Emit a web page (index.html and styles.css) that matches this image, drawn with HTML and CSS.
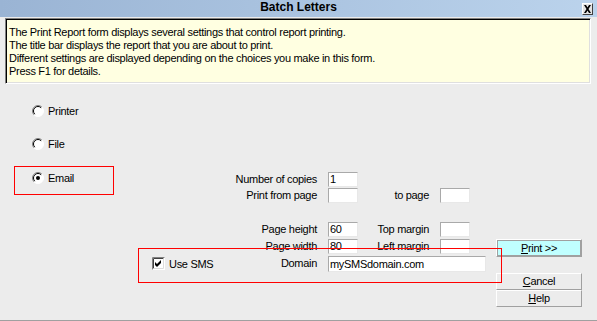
FILE: index.html
```html
<!DOCTYPE html>
<html>
<head>
<meta charset="utf-8">
<link rel="stylesheet" href="styles.css">
</head>
<body>
<div class="window">
  <div class="titlebar">
    <span class="title">Batch Letters</span>
    <span class="close">
      <svg width="9" height="8" viewBox="0 0 9 8"><path d="M1 0h2l1.5 2.5L6 0h2L5.5 4 8 8H6L4.5 5.5 3 8H1l2.5-4z" fill="#000"/></svg>
    </span>
  </div>
  <div class="info">
    <div>The Print Report form displays several settings that control report printing.</div>
    <div>The title bar displays the report that you are about to print.</div>
    <div>Different settings are displayed depending on the choices you make in this form.</div>
    <div>Press F1 for details.</div>
  </div>
  <div class="main">
    <div class="radios">
      <div class="radio"><svg class="rb" width="12" height="12" viewBox="0 0 12 12"><circle cx="6" cy="6" r="5.5" fill="#fff"/><path d="M2.1 9.9A5.5 5.5 0 0 1 9.9 2.1" fill="none" stroke="#808080"/><path d="M2.8 9.2A4.5 4.5 0 0 1 9.2 2.8" fill="none" stroke="#000"/><path d="M9.9 2.1A5.5 5.5 0 0 1 2.1 9.9" fill="none" stroke="#fff"/></svg><span>Printer</span></div>
      <div class="radio"><svg class="rb" width="12" height="12" viewBox="0 0 12 12"><circle cx="6" cy="6" r="5.5" fill="#fff"/><path d="M2.1 9.9A5.5 5.5 0 0 1 9.9 2.1" fill="none" stroke="#808080"/><path d="M2.8 9.2A4.5 4.5 0 0 1 9.2 2.8" fill="none" stroke="#000"/><path d="M9.9 2.1A5.5 5.5 0 0 1 2.1 9.9" fill="none" stroke="#fff"/></svg><span>File</span></div>
      <div class="radio"><svg class="rb" width="12" height="12" viewBox="0 0 12 12"><circle cx="6" cy="6" r="5.5" fill="#fff"/><path d="M2.1 9.9A5.5 5.5 0 0 1 9.9 2.1" fill="none" stroke="#808080"/><path d="M2.8 9.2A4.5 4.5 0 0 1 9.2 2.8" fill="none" stroke="#000"/><path d="M9.9 2.1A5.5 5.5 0 0 1 2.1 9.9" fill="none" stroke="#fff"/><circle cx="6" cy="6" r="2" fill="#000"/></svg><span>Email</span></div>
    </div>
    <div class="form">
      <div class="lbl c2 r1">Number of copies</div>
      <div class="field c3 r1">1</div>
      <div class="lbl c2 r2">Print from page</div>
      <div class="field c3 r2"></div>
      <div class="lbl c4 r2">to page</div>
      <div class="field c5 r2"></div>
      <div class="lbl c2 r3">Page height</div>
      <div class="field c3 r3">60</div>
      <div class="lbl c4 r3">Top margin</div>
      <div class="field c5 r3"></div>
      <div class="lbl c2 r4">Page width</div>
      <div class="field c3 r4">80</div>
      <div class="lbl c4 r4">Left margin</div>
      <div class="field c5 r4"></div>
      <div class="check c1 r5"><svg width="13" height="13" viewBox="0 0 13 13"><rect x="0" y="0" width="13" height="13" fill="#fff"/><path d="M0.5 12.5V0.5H12.5" fill="none" stroke="#808080"/><path d="M1.5 11.5V1.5H11.5" fill="none" stroke="#404040"/><path d="M1.5 11.5H11.5V1.5" fill="none" stroke="#dcdcdc"/><polygon points="3,5 5,7 9,3 9,6 5,10 3,8" fill="#000"/></svg><span>Use SMS</span></div>
      <div class="lbl c2 r5">Domain</div>
      <div class="field domain r5">mySMSdomain.com</div>
    </div>
    <div class="buttons">
      <div class="btn print"><u>P</u>rint &gt;&gt;</div>
      <div class="btn"><u>C</u>ancel</div>
      <div class="btn"><u>H</u>elp</div>
    </div>
    <div class="mark mark-email"></div>
    <div class="mark mark-sms"></div>
  </div>
</div>
</body>
</html>
```
FILE: styles.css
```css
html, body {
  margin: 0;
  padding: 0;
}
body {
  background: #ececec;
  font-family: "Liberation Sans", Arial, sans-serif;
  font-size: 11px;
  letter-spacing: -0.3px;
  color: #000;
  width: 597px;
  height: 321px;
  overflow: hidden;
}
.window {
  width: 597px;
}
.titlebar {
  height: 17px;
  display: grid;
  grid-template-columns: 1fr auto 1fr;
  background: linear-gradient(to right, #9ab4d4, #bbd3ec);
}
.title {
  grid-column: 2;
  font-weight: bold;
  font-size: 12px;
  letter-spacing: 0;
  line-height: 15px;
}
.close {
  grid-column: 3;
  justify-self: end;
  align-self: start;
  margin: 3px 4px 0 0;
  box-sizing: border-box;
  width: 11px;
  height: 12px;
  background: #e4e4e4;
  border: 1px solid;
  border-color: #fff #404040 #404040 #fff;
  display: flex;
  align-items: center;
  justify-content: center;
}
.info {
  margin: 1px 6px 0 5px;
  padding: 7px 4px 5px 3px;
  border: 1px solid;
  border-color: #808080 #fff #fff #808080;
  box-shadow: inset 1px 1px 0 #000, inset -1px -1px 0 #dfdfdf;
  background: #ffffe1;
  line-height: 13px;
}
.main {
  position: relative;
  display: flex;
  height: 236px;
  border-bottom: 1px solid #a0a0a0;
}
.radios {
  width: 140px;
  padding-top: 21px;
  box-sizing: border-box;
  display: grid;
  grid-template-rows: 33px 34px 12px;
  align-content: start;
}
.radio {
  display: flex;
  align-items: center;
  gap: 4px;
  height: 12px;
  padding-left: 32px;
  line-height: 12px;
}
.rb {
  display: block;
  flex: none;
}
.form {
  width: 356px;
  box-sizing: border-box;
  padding-top: 88px;
  display: grid;
  grid-template-columns: 90px 98px 30px 82px 30px 26px;
  grid-template-rows: 16px 34px 17px 17px 17px;
  align-items: start;
}
.c1 { grid-column: 1; }
.c2 { grid-column: 2; }
.c3 { grid-column: 3; }
.c4 { grid-column: 4; }
.c5 { grid-column: 5; }
.r1 { grid-row: 1; }
.r2 { grid-row: 2; }
.r3 { grid-row: 3; }
.r4 { grid-row: 4; }
.r5 { grid-row: 5; }
.lbl {
  text-align: right;
  padding-right: 11px;
  line-height: 15px;
  white-space: nowrap;
}
.field {
  box-sizing: border-box;
  width: 30px;
  height: 15px;
  background: #fff;
  border: 1px solid;
  border-color: #a9a9a9 #e8e8e8 #e8e8e8 #a9a9a9;
  padding-left: 1px;
  line-height: 13px;
  white-space: nowrap;
}
.domain {
  grid-column: 3 / 7;
  width: 158px;
  height: 16px;
  line-height: 14px;
}
.check {
  display: flex;
  align-items: center;
  gap: 4px;
  padding-left: 12px;
  height: 15px;
}
.check svg {
  display: block;
  flex: none;
}
.buttons {
  width: 86px;
  box-sizing: border-box;
  padding-top: 155px;
  display: flex;
  flex-direction: column;
}
.btn {
  box-sizing: border-box;
  height: 17px;
  border: 1px solid;
  border-color: #fff #a0a0a0 #a0a0a0 #fff;
  text-align: center;
  line-height: 15px;
}
.btn.print {
  height: 18px;
  margin-bottom: 16px;
  background: #c0ffff;
  box-shadow: inset 0 0 0 1px #a0a0a0;
  line-height: 16px;
}
.mark {
  position: absolute;
  box-sizing: border-box;
  border: 1px solid #ff0000;
}
.mark-email {
  left: 14px;
  top: 82px;
  width: 100px;
  height: 29px;
}
.mark-sms {
  left: 138px;
  top: 164px;
  width: 364px;
  height: 35px;
}
```
